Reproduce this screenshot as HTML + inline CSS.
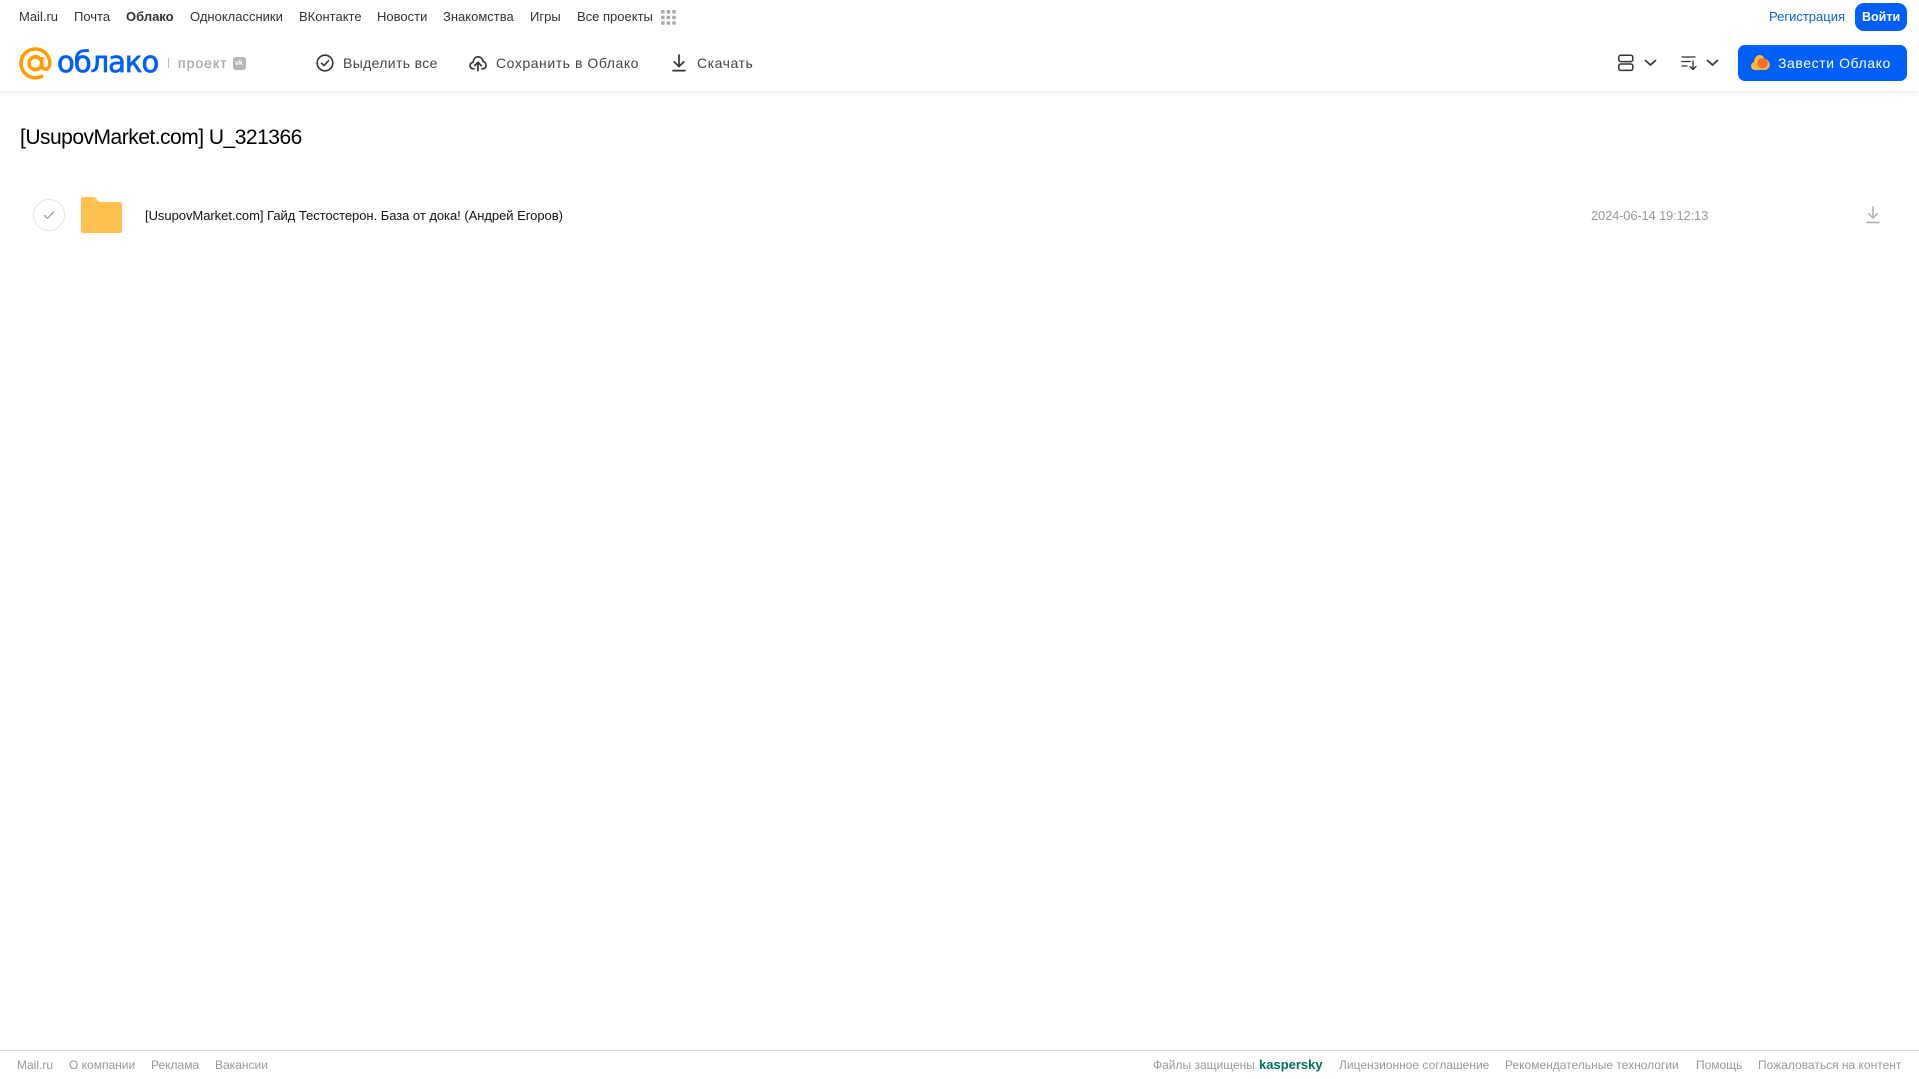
<!DOCTYPE html>
<html lang="ru"><head><meta charset="utf-8"><title>Облако</title>
<style>
html,body{margin:0;padding:0;background:#fff}
body{width:1919px;height:1079px;position:relative;overflow:hidden;font-family:"Liberation Sans",sans-serif}
.t{position:absolute;white-space:nowrap;line-height:16px}
.n{top:9px;font-size:13px;color:#333}
.m{top:55px;font-size:14px;color:#444;line-height:16px}
.f{top:1058px;font-size:12px;color:#999;line-height:14px}
svg{position:absolute;overflow:visible}
#hd{position:absolute;left:0;top:0;width:1919px;height:91px;background:#fff;box-shadow:0 1px 6px rgba(0,0,0,.09)}
</style></head><body>
<div id="hd"></div>
<span class="t n" style="left:19px">Mail.ru</span>
<span class="t n" style="left:74px">Почта</span>
<span class="t n" style="left:126px;font-weight:bold">Облако</span>
<span class="t n" style="left:190px">Одноклассники</span>
<span class="t n" style="left:299px">ВКонтакте</span>
<span class="t n" style="left:377px">Новости</span>
<span class="t n" style="left:443px">Знакомства</span>
<span class="t n" style="left:530px">Игры</span>
<span class="t n" style="left:577px">Все проекты</span>
<svg style="left:661px;top:10px" width="15" height="15" fill="#aaa"><rect x="0" y="0" width="3.6" height="3.6" rx="1"/><rect x="5.6" y="0" width="3.6" height="3.6" rx="1"/><rect x="11.2" y="0" width="3.6" height="3.6" rx="1"/><rect x="0" y="5.6" width="3.6" height="3.6" rx="1"/><rect x="5.6" y="5.6" width="3.6" height="3.6" rx="1"/><rect x="11.2" y="5.6" width="3.6" height="3.6" rx="1"/><rect x="0" y="11.2" width="3.6" height="3.6" rx="1"/><rect x="5.6" y="11.2" width="3.6" height="3.6" rx="1"/><rect x="11.2" y="11.2" width="3.6" height="3.6" rx="1"/></svg>
<span class="t n" style="left:1769px;color:#0d62d6">Регистрация</span>
<div style="position:absolute;left:1855px;top:3px;width:52px;height:28px;border-radius:9px;background:#005ff9"></div>
<span class="t n" style="left:1862px;color:#fff;font-weight:bold;font-size:12.5px">Войти</span>

<svg style="left:19px;top:47px" width="33" height="33" viewBox="0 0 33 33" fill="none" stroke="#ff9e00" stroke-width="3.6"><circle cx="16.4" cy="16.2" r="6.4"/><path d="M22.8 10v8.5c0 5.2 7.9 5 8-1.800C31 8.500 24.600 2 16.400 2 8.400 2 2 8.400 2 16.400S8.400 30.800 16.400 30.800c3 0 5.400-.7 7.600-2.200"/></svg>
<span class="t" style="left:57px;top:44px;font-size:29px;line-height:36px;color:#005ff9;font-family:'DejaVu Sans',sans-serif;letter-spacing:-1px;-webkit-text-stroke:.7px #005ff9">облако</span>
<div style="position:absolute;left:168px;top:58px;width:1px;height:10px;background:#bbb"></div>
<span class="t" style="left:178px;top:55px;font-size:14px;color:#aaa;letter-spacing:1px;-webkit-text-stroke:.3px #aaa">проект</span>
<div style="position:absolute;left:233px;top:57px;width:13px;height:13px;border-radius:3px;background:#b5b5b5"></div>
<span class="t" style="left:235px;top:58px;font-size:7px;line-height:11px;color:#fff;font-weight:bold">vk</span>

<svg style="left:316px;top:54px" width="18" height="18" viewBox="0 0 18 18" fill="none" stroke="#333" stroke-width="1.6"><circle cx="9" cy="9" r="7.8"/><path d="M5.500 9.200l2.500 2.400 4.500-4.800" stroke-linecap="round" stroke-linejoin="round"/></svg>
<span class="t m" style="left:343px;letter-spacing:.35px">Выделить все</span>
<svg style="left:469px;top:54px" width="18" height="18" viewBox="0 0 18 18" fill="none" stroke="#333" stroke-width="1.700" stroke-linecap="round" stroke-linejoin="round"><path d="M5 14.800H4.200C2.400 14.800 1 13.400 1 11.600c0-1.700 1.300-3 3-3.200C4.500 5 6.500 2.800 9.200 2.800c2.600 0 4.600 2 5 4.800 1.700.3 2.900 2 2.900 3.900 0 1.800-1.400 3.300-3.200 3.300H13"/><path d="M9 16.500V8.500M5.800 11.500L9 8.300l3.200 3.200"/></svg>
<span class="t m" style="left:496px;letter-spacing:.55px">Сохранить в Облако</span>
<svg style="left:671px;top:54px" width="16" height="18" viewBox="0 0 16 18" fill="none" stroke="#333" stroke-width="1.700" stroke-linecap="round" stroke-linejoin="round"><path d="M8 1v11M3.200 7.800L8 12.500l4.800-4.700M2 16.600h12"/></svg>
<span class="t m" style="left:697px;letter-spacing:.55px">Скачать</span>

<svg style="left:1617px;top:54px" width="18" height="18" viewBox="0 0 18 18" fill="none" stroke="#333" stroke-width="1.500"><rect x="1.800" y="1.200" width="14" height="6.400" rx="2"/><rect x="1.800" y="10" width="14" height="6.400" rx="2"/></svg>
<svg style="left:1644px;top:59px" width="13" height="8" viewBox="0 0 13 8" fill="none" stroke="#333" stroke-width="1.700" stroke-linecap="round" stroke-linejoin="round"><path d="M1.500 1.500l5 4.500 5-4.500"/></svg>
<svg style="left:1681px;top:55px" width="17" height="16" viewBox="0 0 17 16" fill="none" stroke="#333" stroke-width="1.300" stroke-linecap="round" stroke-linejoin="round"><path d="M1 2h13M1 6.500h8M1 11h5M12 6v8.500M9 11.500l3 3 3-3"/></svg>
<svg style="left:1706px;top:59px" width="13" height="8" viewBox="0 0 13 8" fill="none" stroke="#333" stroke-width="1.700" stroke-linecap="round" stroke-linejoin="round"><path d="M1.500 1.500l5 4.500 5-4.500"/></svg>
<div style="position:absolute;left:1738px;top:45px;width:169px;height:36px;border-radius:7px;background:#005ff9"></div>
<svg style="left:1751px;top:54px" width="19" height="17" viewBox="0 0 19 17"><path d="M4 16C1.800 16 0 14.200 0 12c0-1.900 1.300-3.400 3-3.900C3.300 4.200 5.500 1 8.500 1c2.500 0 4.400 1.700 5 4 2.900.1 5.200 2.700 5.200 5.700 0 3-2.300 5.300-5.200 5.300z" fill="#ffb83d"/><circle cx="11.600" cy="9.300" r="5.200" fill="#f2702a"/></svg>
<span class="t m" style="left:1778px;color:#fff;letter-spacing:.58px">Завести Облако</span>

<span class="t" style="left:20px;top:125px;font-size:21px;line-height:26px;color:#000;letter-spacing:-.5px">[UsupovMarket.com] U_321366</span>

<div style="position:absolute;left:33px;top:199px;width:30px;height:30px;border:1px solid #e6e6e6;border-radius:50%"></div>
<svg style="left:43px;top:210px" width="12" height="10" viewBox="0 0 12 10" fill="none" stroke="#999" stroke-width="1.300" stroke-linecap="round" stroke-linejoin="round"><path d="M1.500 5.500l3 2.800 6-6.300"/></svg>
<svg style="left:81px;top:197px" width="41" height="36" viewBox="0 0 41 36"><path d="M2 0h10c2 0 3 1 4 2.500L18 5h21c1.200 0 2 .8 2 2v27c0 1.200-.8 2-2 2H2c-1.200 0-2-.8-2-2V2C0 .8.800 0 2 0z" fill="#ffc14f"/><path d="M0 9h41v1H0z" fill="#f7b23c" opacity=".5"/></svg>
<span class="t" style="left:145px;top:208px;font-size:13px;color:#111;letter-spacing:-.04px">[UsupovMarket.com] Гайд Тестостерон. База от дока! (Андрей Егоров)</span>
<span class="t" style="left:1591px;top:208px;font-size:13px;color:#999;letter-spacing:-.19px">2024-06-14 19:12:13</span>
<svg style="left:1866px;top:206px" width="14" height="18" viewBox="0 0 14 18" fill="none" stroke="#aaa" stroke-width="1.400" stroke-linecap="round" stroke-linejoin="round"><path d="M7 1v11M2.500 7.500L7 12l4.500-4.500M1 16.500h12"/></svg>

<div style="position:absolute;left:0;top:1050px;width:1919px;height:1px;background:#d9d9d9"></div>
<span class="t f" style="left:17px">Mail.ru</span>
<span class="t f" style="left:69px">О компании</span>
<span class="t f" style="left:151px">Реклама</span>
<span class="t f" style="left:215px">Вакансии</span>
<span class="t f" style="left:1153px">Файлы защищены</span>
<span class="t f" style="left:1259px;color:#00705f;font-weight:bold;font-size:13px">kaspersky</span>
<span class="t f" style="left:1339px">Лицензионное соглашение</span>
<span class="t f" style="left:1505px">Рекомендательные технологии</span>
<span class="t f" style="left:1696px">Помощь</span>
<span class="t f" style="left:1758px">Пожаловаться на контент</span>
</body></html>
